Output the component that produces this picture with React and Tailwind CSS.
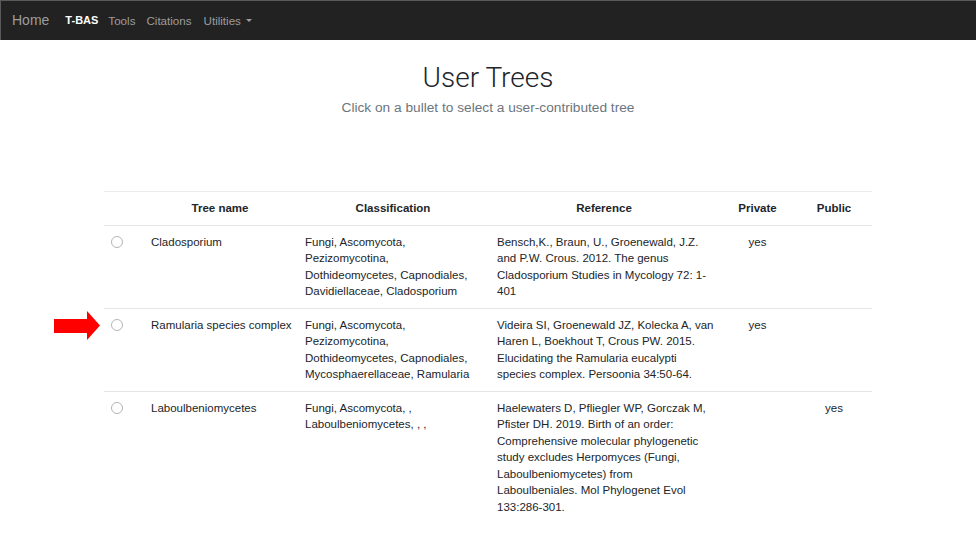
import React from "react";

const rows = [
  {
    name: "Cladosporium",
    cls: ["Fungi, Ascomycota,", "Pezizomycotina,", "Dothideomycetes, Capnodiales,", "Davidiellaceae, Cladosporium"],
    ref: ["Bensch,K., Braun, U., Groenewald, J.Z.", "and P.W. Crous. 2012. The genus", "Cladosporium Studies in Mycology 72: 1-", "401"],
    priv: "yes",
    pub: "",
  },
  {
    name: "Ramularia species complex",
    cls: ["Fungi, Ascomycota,", "Pezizomycotina,", "Dothideomycetes, Capnodiales,", "Mycosphaerellaceae, Ramularia"],
    ref: ["Videira SI, Groenewald JZ, Kolecka A, van", "Haren L, Boekhout T, Crous PW. 2015.", "Elucidating the Ramularia eucalypti", "species complex. Persoonia 34:50-64."],
    priv: "yes",
    pub: "",
    arrow: true,
  },
  {
    name: "Laboulbeniomycetes",
    cls: ["Fungi, Ascomycota, ,", "Laboulbeniomycetes, , ,"],
    ref: [
      "Haelewaters D, Pfliegler WP, Gorczak M,",
      "Pfister DH. 2019. Birth of an order:",
      "Comprehensive molecular phylogenetic",
      "study excludes Herpomyces (Fungi,",
      "Laboulbeniomycetes) from",
      "Laboulbeniales. Mol Phylogenet Evol",
      "133:286-301.",
    ],
    priv: "",
    pub: "yes",
  },
];

function Lines({ lines }) {
  return lines.map((l, i) => <div key={i} className="whitespace-nowrap">{l}</div>);
}

export default function App() {
  return (
    <div className="min-h-[539px] bg-white font-['Liberation_Sans',Arial,sans-serif] text-[#212529]">
      <nav className="flex h-[40px] items-center border-t border-l border-[#5a5a5a] bg-[#222222] pl-[11px]">
        <span className="text-[14px] text-[#9d9d9d]">Home</span>
        <span className="ml-[16px] text-[11px] font-bold text-white">T-BAS</span>
        <span className="ml-[10px] text-[11.6px] text-[#9d9d9d]">Tools</span>
        <span className="ml-[11px] text-[11.6px] text-[#9d9d9d]">Citations</span>
        <span className="ml-[12px] flex items-center text-[11.6px] text-[#9d9d9d]">
          Utilities
          <span className="ml-[5px] mt-[1px] h-0 w-0 border-x-[3px] border-t-[3px] border-x-transparent border-t-[#9d9d9d]" />
        </span>
      </nav>

      <div className="flex flex-col items-center">
        <h1 className="mt-[20px] font-['Roboto',sans-serif] text-[28px] font-light leading-[36px] text-[#212529]">User Trees</h1>
        <p className="mt-[4px] text-[13.7px] leading-[16px] text-[#6c757d]">Click on a bullet to select a user-contributed tree</p>
      </div>

      <div className="mx-auto mt-[75px] w-[768px]">
        <table className="w-full table-fixed border-collapse text-[11.5px] leading-[16.5px]">
          <colgroup>
            <col className="w-[39px]" />
            <col className="w-[154px]" />
            <col className="w-[192px]" />
            <col className="w-[230px]" />
            <col className="w-[77px]" />
            <col className="w-[76px]" />
          </colgroup>
          <thead>
            <tr className="border-t border-[#ececec]">
              <th className="px-[8px] py-[8px]" />
              <th className="px-[8px] py-[8px] text-center font-bold">Tree name</th>
              <th className="px-[8px] py-[8px] text-center font-bold">Classification</th>
              <th className="px-[8px] py-[8px] text-center font-bold">Reference</th>
              <th className="px-[8px] py-[8px] text-center font-bold">Private</th>
              <th className="px-[8px] py-[8px] text-center font-bold">Public</th>
            </tr>
          </thead>
          <tbody>
            {rows.map((r, i) => (
              <tr key={i} className="border-t border-[#e6e6e6] align-top">
                <td className="relative px-[8px] py-[8px]">
                  {r.arrow && (
                    <svg className="absolute left-[-50px] top-[2px]" width="47" height="30" viewBox="0 0 47 30">
                      <polygon points="0,8 33,8 33,0 46,14.5 33,29 33,22 0,22" fill="#ff0000" />
                    </svg>
                  )}
                  <span className="mt-[2px] ml-[-1px] block h-[12px] w-[12px] rounded-full border border-[#b5b5b5] bg-white" />
                </td>
                <td className="px-[8px] py-[8px] whitespace-nowrap">{r.name}</td>
                <td className="px-[8px] py-[8px]"><Lines lines={r.cls} /></td>
                <td className="px-[8px] py-[8px]"><Lines lines={r.ref} /></td>
                <td className="px-[8px] py-[8px] text-center">{r.priv}</td>
                <td className="px-[8px] py-[8px] text-center">{r.pub}</td>
              </tr>
            ))}
          </tbody>
        </table>
      </div>
    </div>
  );
}
